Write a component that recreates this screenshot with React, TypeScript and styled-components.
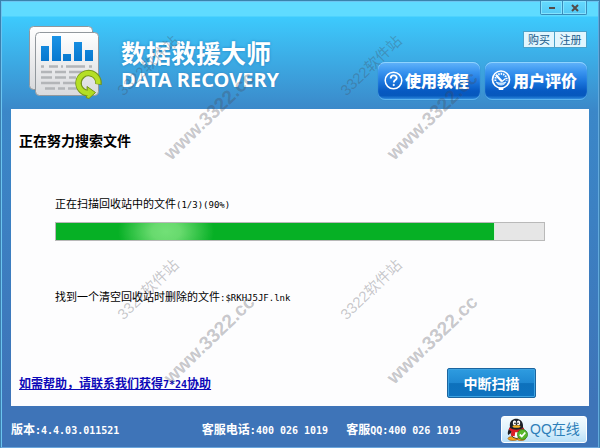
import React from "react";
import styled, { createGlobalStyle } from "styled-components";

const GlobalStyle = createGlobalStyle`
  * { box-sizing: border-box; }
  body { margin: 0; font-family: "Liberation Sans", "Noto Sans CJK SC", sans-serif; }
  button { font-family: inherit; margin: 0; padding: 0; cursor: pointer; }
`;

const Window = styled.div`
  position: relative;
  display: flex;
  flex-direction: column;
  min-height: 100vh;
  overflow: hidden;
  border: 1px solid #3b7fae;
  border-top-color: #3a83ad;
  border-bottom-color: #6ba6dc;
  background: linear-gradient(#5fdbff 0 15px, #3dcafd 16px, #3b87c8 110px, #3c80c2 220px, #3e74b8 400px);
  box-shadow: inset 1px 1px 0 #6cc4f0, inset -1px 0 0 #62a9dc;
`;

const Header = styled.header`
  display: flex;
  justify-content: space-between;
  height: 108px;
  padding: 0 12px 0 27px;
`;

const Brand = styled.div`
  display: flex;
  align-items: flex-start;
  gap: 17px;
  padding-top: 24px;
`;

const BrandText = styled.div`
  display: flex;
  flex-direction: column;
  padding-top: 11px;
  color: #fff;
`;

const Title = styled.h1`
  margin: 0;
  font: 700 25px/32px "Noto Sans CJK SC", sans-serif;
  text-shadow: 0 0 3px #2383c2;
`;

const Subtitle = styled.div`
  font: 700 20px/24px "Noto Sans", sans-serif;
  text-shadow: 0 0 2px #2b80bd;
`;

const Actions = styled.div`
  display: flex;
  flex-direction: column;
  align-items: flex-end;
`;

const WindowControls = styled.div`
  display: flex;
  border: 1px solid #398cbb;
  border-top: 0;
  border-radius: 0 0 2px 2px;
`;

const ControlButton = styled.button`
  display: flex;
  align-items: center;
  justify-content: center;
  width: 21px;
  height: 13px;
  border: 0;
  background: linear-gradient(#65daff, #55c9f4);
  box-shadow: inset 0 0 0 1px #83e3ff;
  & + & { border-left: 1px solid #398cbb; width: 24px; }
`;

const AccountLinks = styled.nav`
  display: flex;
  margin-top: 16px;
`;

const AccountLink = styled.a`
  width: 32px;
  height: 17px;
  border: 1px solid #4aa3cb;
  background: #e2f6fe;
  color: #1c5c8c;
  font: 11px/15px "Noto Sans CJK SC", sans-serif;
  text-align: center;
  text-decoration: none;
  & + & { border-left: 0; }
`;

const FeatureRow = styled.div`
  display: flex;
  gap: 5px;
  margin-top: 14px;
`;

const FeatureButton = styled.button`
  display: flex;
  align-items: center;
  gap: 2px;
  width: 102px;
  height: 38px;
  padding: 0 0 2px 6px;
  border: 0;
  border-radius: 7px;
  background: linear-gradient(#62b4fa, #3a95f0 25%, #1b76dd 52%, #0759c2 76%, #0658bd 88%, #3291e2);
  box-shadow: inset 0 1px 0 #8fd4ff, inset 0 -1px 1px #64b8f0, 0 0 1px #2675bd;
  color: #fff;
  font: 900 16px/20px "Noto Sans CJK SC", sans-serif;
  white-space: nowrap;
`;

const Content = styled.main`
  display: flex;
  flex: 1;
  flex-direction: column;
  margin: 0 10px;
  padding: 19px 8px 8px;
  background: #fdfdfe;
  color: #000;
`;

const Heading = styled.h2`
  margin: 0;
  font: 700 14px/24px "Noto Sans CJK SC", sans-serif;
`;

const ScanArea = styled.section`
  padding: 42px 36px 0;
`;

const Status = styled.p`
  margin: 0;
  font: 11px/18px "Noto Sans CJK SC", sans-serif;
  white-space: nowrap;
`;

const Mono = styled.span<{ $size: number }>`
  font-family: "DejaVu Sans Mono", monospace;
  font-size: ${(p) => p.$size}px;
  line-height: 12px;
  white-space: pre;
`;

const Track = styled.div`
  height: 19px;
  margin: 10px 0 46px;
  border: 1px solid #b9b9b9;
  background: #e6e6e6;
`;

const Fill = styled.div`
  height: 100%;
  border-right: 1px solid #d6f0d8;
  background:
    radial-gradient(ellipse 48px 32px at 110px 50%, #72e077 0, #68da6e 30%, transparent 100%),
    #06b025;
`;

const ContentFooter = styled.div`
  display: flex;
  align-items: center;
  justify-content: space-between;
  margin-top: auto;
  padding-right: 45px;
`;

const HelpLink = styled.a`
  color: #0c08b8;
  font: 700 12px/18px "Noto Sans CJK SC", sans-serif;
  text-decoration: underline;
  white-space: nowrap;
`;

const StopButton = styled.button`
  width: 89px;
  height: 30px;
  border: 1px solid #1c659f;
  border-radius: 2px;
  background: linear-gradient(#2e9ce0, #1f88d2 50%, #0d71bc 52%, #0e73c0);
  box-shadow: inset 0 0 0 1px #3da3e2;
  color: #fff;
  font: 700 14px/20px "Noto Sans CJK SC", sans-serif;
`;

const Footer = styled.footer`
  display: flex;
  align-items: center;
  justify-content: space-between;
  height: 41px;
  padding: 5px 12px 0 10px;
  color: #fff;
  font: 700 12px/18px "Noto Sans CJK SC", sans-serif;
  white-space: nowrap;
`;

const Contacts = styled.div`
  display: flex;
  gap: 18px;
  margin-left: 42px;
`;

const QQButton = styled.button`
  display: flex;
  align-items: center;
  gap: 2px;
  width: 86px;
  height: 27px;
  padding-left: 5px;
  border: 1px solid #fff;
  border-radius: 3px;
  background: linear-gradient(#f4fbff, #dff2fc 50%, #b9e0f8);
  color: #2e7fb9;
  font: 14px/20px "Liberation Sans", "Noto Sans CJK SC", sans-serif;
  white-space: nowrap;
`;

const Watermark = styled.div<{ $x: number; $y: number }>`
  position: absolute;
  left: ${(p) => p.$x}px;
  top: ${(p) => p.$y}px;
  color: rgba(70, 70, 80, 0.3);
  pointer-events: none;
`;

const MarkLine = styled.span<{ $x: number; $y: number; $size: number }>`
  position: absolute;
  left: ${(p) => p.$x}px;
  top: ${(p) => p.$y}px;
  font-size: ${(p) => p.$size}px;
  font-weight: ${(p) => (p.$size > 18 ? 700 : 400)};
  line-height: 20px;
  white-space: nowrap;
  transform: rotate(-44deg);
  transform-origin: 0 100%;
`;

const ReportIcon = () => (
  <svg width="76" height="76" viewBox="0 0 76 76" aria-hidden="true">
    <defs>
      <linearGradient id="paper" x2="0" y2="1">
        <stop stopColor="#fff" />
        <stop offset="1" stopColor="#d9dadd" />
      </linearGradient>
      <linearGradient id="bars" x2="0" y2="1">
        <stop stopColor="#1b93e6" />
        <stop offset="1" stopColor="#0878cf" />
      </linearGradient>
    </defs>
    <rect x="1.5" y="1.5" width="63" height="63" rx="4" fill="url(#paper)" stroke="#90979d" />
    <rect x="7.5" y="7.5" width="63" height="63" rx="4" fill="url(#paper)" stroke="#92989d" />
    <path d="M13 21h8v15h-8zM24 11h9v25h-9zM35 29h8v7h-8zM46 17h8v19h-8zM57 25h8v11h-8z" fill="url(#bars)" />
    <path
      d="M13 41.5h3m5 0h9m3 0h2m3 0h19m4 0h3M13 47h11m3 0h11m3 0h15m3 0h6M13 52.500h11m3 0h11m3 0h7M13 58h19m3 0h13M17 63.500h10m3 0h7m3 0h11"
      stroke="#b3b5b8"
      strokeWidth="2.4"
    />
    <path d="M70.500 59.500A10 10 0 1 0 59 68" fill="none" stroke="#73941b" strokeWidth="6.500" />
    <path d="M59 61.500l8.500 6-6.500 6-3-1 1.500-3z" fill="#b2dc22" stroke="#73941b" />
    <path d="M70.300 58.800A10 10 0 1 0 61 68" fill="none" stroke="#b5df25" strokeWidth="4.500" />
  </svg>
);

const HelpIcon = () => (
  <svg width="19" height="19" viewBox="0 0 19 19" fill="none" stroke="#fff" aria-hidden="true">
    <circle cx="9.5" cy="9.5" r="8.3" strokeWidth="1.5" />
    <path d="M6.700 7.500c0-4 6-4 6-.6 0 2.200-2.900 2.200-2.900 4.600" strokeWidth="1.9" />
    <circle cx="9.7" cy="14" r=".7" fill="#fff" />
  </svg>
);

const RatingIcon = () => (
  <svg width="20" height="20" viewBox="0 0 20 20" fill="none" stroke="#fff" aria-hidden="true">
    <circle cx="10" cy="9.5" r="8.5" strokeWidth="1.7" />
    <path d="M4.500 11a5.700 5.700 0 1 1 11 0" strokeWidth="2" strokeDasharray="1.500 1" />
    <path d="M5 12c2 4 8 4 10 0l-3 1h-4z" fill="#b7dcff" stroke="#d3eaff" />
    <path d="M5 5l6 6.500" strokeWidth="2.2" />
    <path d="M11 11.500l3.500-3" strokeWidth="1.2" />
    <path d="M8 18h4v1.500H8z" fill="#fff" />
  </svg>
);

const Penguin = () => (
  <svg width="21" height="23" viewBox="0 0 21 23" aria-hidden="true">
    <ellipse cx="6" cy="20.500" rx="5" ry="2" fill="#f4a51c" stroke="#8a4a08" strokeWidth=".6" />
    <ellipse cx="14" cy="20.500" rx="4.500" ry="2" fill="#f4a51c" stroke="#8a4a08" strokeWidth=".6" />
    <path d="M3 9c-2 3-3 7-1.500 8l2-2c1 4 3 5.500 6 5.500s5.500-2 6-5l2.500 1c1-2-.5-5-2-7z" fill="#171a20" />
    <ellipse cx="9.5" cy="15" rx="5" ry="5" fill="#fff" />
    <path d="M3 9C1-2 17-2 16 9c0 5-13 5-13 0z" fill="#1b2028" />
    <ellipse cx="7.5" cy="5" rx="1.7" ry="2.4" fill="#fff" />
    <ellipse cx="11.5" cy="5" rx="1.7" ry="2.4" fill="#fff" />
    <circle cx="8" cy="5.3" r=".8" />
    <circle cx="11" cy="5.3" r=".8" />
    <ellipse cx="9.5" cy="8.500" rx="4" ry="1.3" fill="#f5b325" />
    <path d="M2.500 9.500c4 3 10 3 14 0l.7 2.500c-3 2-6 2.500-9 2.200l-.5 4-3.700-.5.500-4.500c-1-.3-2-.8-2.700-1.400z" fill="#dd1d25" />
    <circle cx="15.500" cy="16.500" r="5" fill="#58b82c" stroke="#2e7d1a" strokeWidth=".8" />
    <path d="M12.800 16.500l2 2 3.500-4" fill="none" stroke="#fff" strokeWidth="1.8" />
  </svg>
);

const marks = [
  { x: 0, y: 0 },
  { x: 223, y: 0 },
  { x: 0, y: 224 },
  { x: 223, y: 224 },
];

export default function App() {
  const percent = 90;
  return (
    <Window>
      <GlobalStyle />
      <Header>
        <Brand>
          <ReportIcon />
          <BrandText>
            <Title>数据救援大师</Title>
            <Subtitle>DATA RECOVERY</Subtitle>
          </BrandText>
        </Brand>
        <Actions>
          <WindowControls>
            <ControlButton aria-label="最小化">
              <svg width="8" height="8" viewBox="0 0 8 8" aria-hidden="true">
                <path d="M1 4h6" stroke="#544b48" strokeWidth="2" />
              </svg>
            </ControlButton>
            <ControlButton aria-label="关闭">
              <svg width="8" height="8" viewBox="0 0 8 8" aria-hidden="true">
                <path d="M1 1l6 6M7 1L1 7" stroke="#544b48" strokeWidth="2" />
              </svg>
            </ControlButton>
          </WindowControls>
          <AccountLinks>
            <AccountLink href="#buy">购买</AccountLink>
            <AccountLink href="#register">注册</AccountLink>
          </AccountLinks>
          <FeatureRow>
            <FeatureButton>
              <HelpIcon />
              使用教程
            </FeatureButton>
            <FeatureButton>
              <RatingIcon />
              用户评价
            </FeatureButton>
          </FeatureRow>
        </Actions>
      </Header>
      <Content>
        <Heading>正在努力搜索文件</Heading>
        <ScanArea>
          <Status>
            正在扫描回收站中的文件<Mono $size={9}>(1/3)({percent}%)</Mono>
          </Status>
          <Track role="progressbar" aria-label="扫描进度" aria-valuenow={percent} aria-valuemin={0} aria-valuemax={100}>
            <Fill style={{ width: `${percent}%` }} />
          </Track>
          <Status>
            找到一个清空回收站时删除的文件<Mono $size={9}>:$RKHJ5JF.lnk</Mono>
          </Status>
        </ScanArea>
        <ContentFooter>
          <HelpLink href="#help">
            如需帮助，请联系我们获得<Mono $size={10}>7*24</Mono>协助
          </HelpLink>
          <StopButton>中断扫描</StopButton>
        </ContentFooter>
      </Content>
      <Footer>
        <span>
          版本<Mono $size={10}>:4.4.03.011521</Mono>
        </span>
        <Contacts>
          <span>
            客服电话<Mono $size={10}>:400 026 1019</Mono>
          </span>
          <span>
            客服<Mono $size={10}>QQ:400 026 1019</Mono>
          </span>
        </Contacts>
        <QQButton>
          <Penguin />
          QQ在线
        </QQButton>
      </Footer>
      {marks.map((m) => (
        <Watermark key={`${m.x}-${m.y}`} $x={m.x} $y={m.y} aria-hidden="true">
          <MarkLine $x={126} $y={79} $size={15}>3322软件站</MarkLine>
          <MarkLine $x={173} $y={143} $size={19}>www.3322.cc</MarkLine>
        </Watermark>
      ))}
    </Window>
  );
}
